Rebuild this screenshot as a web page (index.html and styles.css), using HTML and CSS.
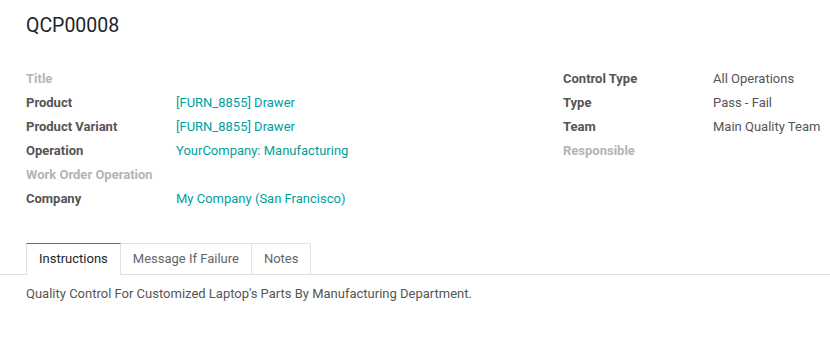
FILE: index.html
```html
<!DOCTYPE html>
<html lang="en">
<head>
    <meta charset="UTF-8">
    <title>QCP00008 - Quality Control Point</title>
    <link rel="stylesheet" href="styles.css">
</head>
<body>

<!-- Form sheet -->
<div class="sheet">
    <h1 class="record-name">QCP00008</h1>

    <div class="groups">
        <div class="group">
            <span class="label muted">Title</span><span class="value"></span>
            <span class="label">Product</span><a class="value link" href="#">[FURN_8855] Drawer</a>
            <span class="label">Product Variant</span><a class="value link" href="#">[FURN_8855] Drawer</a>
            <span class="label">Operation</span><a class="value link" href="#">YourCompany: Manufacturing</a>
            <span class="label muted">Work Order Operation</span><span class="value"></span>
            <span class="label">Company</span><a class="value link" href="#">My Company (San Francisco)</a>
        </div>
        <div class="group">
            <span class="label">Control Type</span><span class="value">All Operations</span>
            <span class="label">Type</span><span class="value">Pass - Fail</span>
            <span class="label">Team</span><span class="value">Main Quality Team</span>
            <span class="label muted">Responsible</span><span class="value"></span>
        </div>
    </div>
</div>

<!-- Notebook -->
<div class="notebook">
    <nav class="tabs">
        <a href="#" class="tab active">Instructions</a>
        <a href="#" class="tab">Message If Failure</a>
        <a href="#" class="tab">Notes</a>
    </nav>
    <div class="tab-pane">
        Quality Control For Customized Laptop's Parts By Manufacturing Department.
    </div>
</div>

</body>
</html>
```

FILE: styles.css
```css
/* General */
* {
    margin: 0;
    padding: 0;
    box-sizing: border-box;
}

body {
    font-family: Roboto, "Liberation Sans", sans-serif;
    font-size: 13px;
    color: #4c4c4c;
    background: #fff;
}

a {
    text-decoration: none;
}

/* Sheet */
.sheet {
    padding: 14px 0 0 26px;
}

.record-name {
    font-size: 19.5px;
    font-weight: 400;
    line-height: 24px;
    color: #212529;
}

.groups {
    display: grid;
    grid-template-columns: 537px 1fr;
    margin-top: 28px;
}

.group {
    display: grid;
    grid-template-columns: 150px 1fr;
    grid-auto-rows: 24px;
    align-items: center;
    align-content: start;
}

.label {
    font-weight: 700;
    color: #555;
    white-space: nowrap;
}

.label.muted {
    color: #b4b4b4;
}

.value {
    color: #555;
    white-space: nowrap;
}

.link {
    color: #00a09d;
}

/* Notebook */
.notebook {
    margin-top: 33px;
}

.tabs {
    display: flex;
    padding-left: 26px;
    border-bottom: 1px solid #dee2e6;
}

.tab {
    display: block;
    padding: 0 12px;
    line-height: 30px;
    color: #666;
    border: 1px solid #dee2e6;
    border-left: none;
    margin-bottom: -1px;
    background: #fff;
}

.tab.active {
    color: #212529;
    border-left: 1px solid #dee2e6;
    border-top-color: #875a7b;
    border-bottom-color: #fff;
}

.tab-pane {
    padding: 9px 26px;
    line-height: 20px;
    color: #555;
}
```
